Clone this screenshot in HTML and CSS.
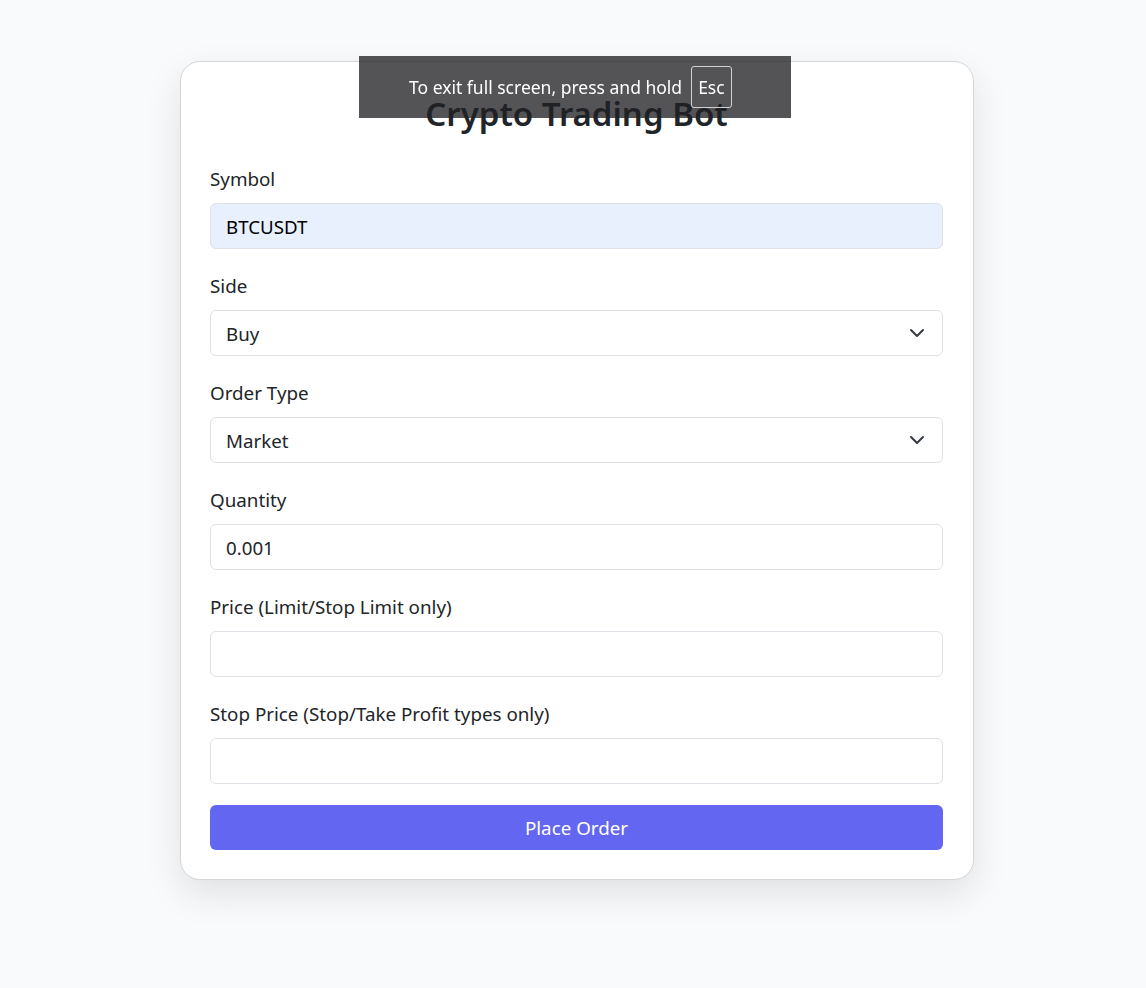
FILE: index.html
```html
<!DOCTYPE html>
<html lang="en">
<head>
<meta charset="utf-8">
<title>Crypto Trading Bot</title>
<link rel="stylesheet" href="styles.css">
</head>
<body>
<main class="card">
  <h1 class="title">Crypto Trading Bot</h1>
  <form class="form">
    <div class="group">
      <label class="label">Symbol</label>
      <input class="field field-autofill" type="text" value="BTCUSDT">
    </div>
    <div class="group">
      <label class="label">Side</label>
      <div class="select">
        <span>Buy</span>
        <svg class="chevron" width="16" height="12" viewBox="0 0 16 12"><path d="M2 3l6 6 6-6" fill="none" stroke="#343a40" stroke-width="2" stroke-linecap="round" stroke-linejoin="round"/></svg>
      </div>
    </div>
    <div class="group">
      <label class="label">Order Type</label>
      <div class="select">
        <span>Market</span>
        <svg class="chevron" width="16" height="12" viewBox="0 0 16 12"><path d="M2 3l6 6 6-6" fill="none" stroke="#343a40" stroke-width="2" stroke-linecap="round" stroke-linejoin="round"/></svg>
      </div>
    </div>
    <div class="group">
      <label class="label">Quantity</label>
      <input class="field" type="text" value="0.001">
    </div>
    <div class="group">
      <label class="label">Price (Limit/Stop Limit only)</label>
      <input class="field" type="text" value="">
    </div>
    <div class="group last">
      <label class="label">Stop Price (Stop/Take Profit types only)</label>
      <input class="field" type="text" value="">
    </div>
    <button class="btn" type="button">Place Order</button>
  </form>
</main>
<div class="fs-toast">
  <span>To exit full screen, press and hold</span>
  <span class="key">Esc</span>
</div>
</body>
</html>
```

FILE: styles.css
```css
* { box-sizing: border-box; }
html, body { height: 100%; }
body {
  margin: 0;
  padding: 61px 0 0 8px;
  background: #f9fafb;
  font-family: "Noto Sans", "Open Sans", sans-serif;
  color: #212529;
}
.card {
  width: 794px;
  margin: 0 auto;
  background: #fff;
  border: 1px solid #d4d6da;
  border-radius: 20px;
  padding: 29px 30px 29px 29px;
  box-shadow: 0 14px 36px rgba(0, 0, 0, 0.1);
}
.title {
  margin: 0 0 31px;
  font-size: 33px;
  line-height: 45px;
  font-weight: 600;
  text-align: center;
  color: #212529;
}
.form { display: flex; flex-direction: column; }
.group {
  display: flex;
  flex-direction: column;
  margin-bottom: 25px;
}
.group.last { margin-bottom: 21px; }
.label {
  font-size: 18.8px;
  line-height: 25px;
  margin-bottom: 11px;
  color: #212529;
}
.field, .select {
  height: 46px;
  width: 100%;
  border: 1px solid #dee2e6;
  border-radius: 6px;
  padding: 0 15px;
  font-family: inherit;
  font-size: 18.7px;
  color: #212529;
  background: #fff;
  outline: none;
}
.field-autofill { background: #e8f0fe; color: #000; }
.select {
  display: flex;
  align-items: center;
  justify-content: space-between;
  padding-right: 17px;
}
.chevron { display: block; }
.btn {
  height: 45px;
  border: none;
  border-radius: 6px;
  background: #6366f1;
  color: #fff;
  font-family: inherit;
  font-size: 18.8px;
  cursor: pointer;
}
.fs-toast {
  position: fixed;
  top: 56px;
  left: 359px;
  width: 432px;
  height: 62px;
  background: rgba(32, 33, 36, 0.77);
  color: #fff;
  display: flex;
  align-items: center;
  justify-content: flex-start;
  gap: 9px;
  font-size: 17.5px;
  padding-left: 50px;
}
.key {
  border: 1px solid #d0d0d0;
  border-radius: 3px;
  height: 42px;
  padding: 0 6px;
  display: flex;
  align-items: center;
}
```
